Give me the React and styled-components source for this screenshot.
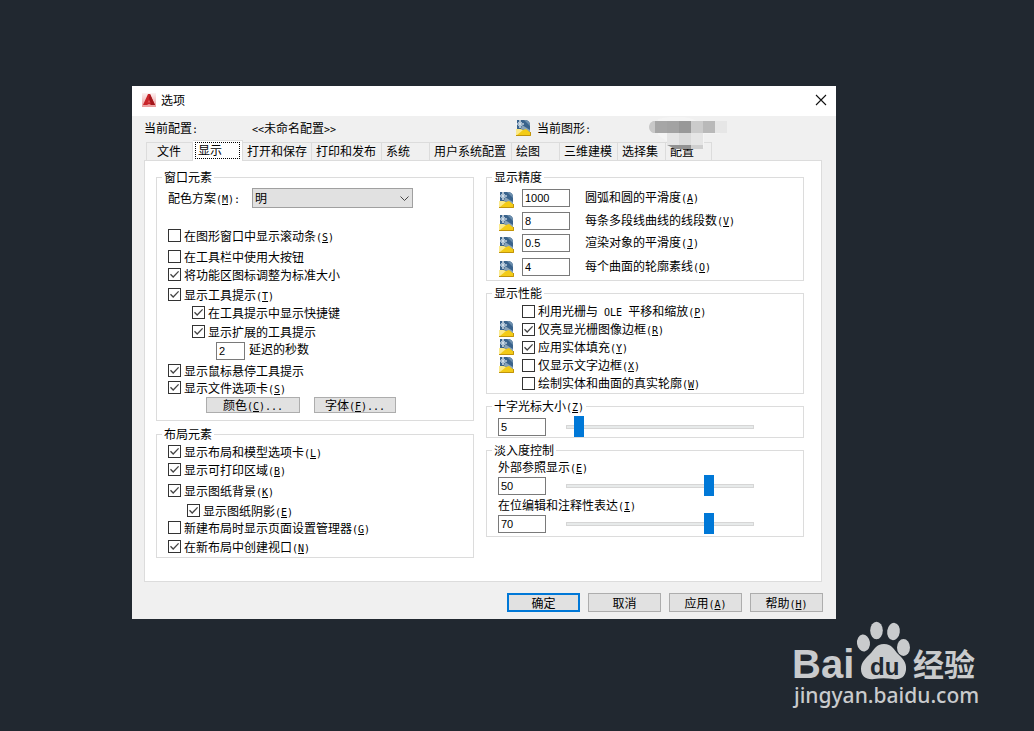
import { useState } from "react";
import styled, { createGlobalStyle } from "styled-components";

const GlobalStyle = createGlobalStyle`
   * {
      box-sizing: border-box;
   }

   body {
      margin: 0;
      background-color: #212830;
   }

   body, button, input, select {
      font-family: "Noto Sans CJK SC", sans-serif;
      font-size: 12px;
      color: #000;
   }
`

const Page = styled.main`
   display: flex;
   flex-direction: column;
   padding-top: 86px;
`

const Dialog = styled.section`
   margin: 0 198px 0 132px;
   min-width: 704px;
   background-color: #f0f0f0;
   line-height: 16px;
   white-space: nowrap;
`

const TitleBar = styled.header`
   display: flex;
   align-items: center;
   gap: 5px;
   height: 30px;
   padding: 0 9px 2px 10px;
   background-color: #fff;

   h1 {
      flex: 1;
      margin: 0;
      font-size: 12px;
      font-weight: 400;
   }

   button {
      display: flex;
      padding: 0;
      border: none;
      background: none;
   }
`

const ProfileBar = styled.div`
   display: grid;
   grid-template-columns: 108px 1fr 308px;
   align-items: center;
   height: 24px;
   padding: 0 12px;
`

const Drawing = styled.div`
   position: relative;
   display: flex;
   align-items: center;
   gap: 6px;
`

const Mosaic = styled.svg`
   position: absolute;
   left: 130px;
   top: -3px;
   z-index: 1;
`

const TabList = styled.div`
   display: flex;
   align-items: flex-end;
   height: 20px;
   padding-left: 14px;
`

const Tab = styled.button`
   width: ${(props) => props.$width}px;
   height: ${(props) => (props.$active ? 21 : 18)}px;
   margin-bottom: ${(props) => (props.$active ? -1 : 0)}px;
   padding: ${(props) => (props.$active ? "1px 2px 2px 2px" : "0 0 2px 4px")};
   border: 1px solid #dcdcdc;
   border-width: 1px 1px 0 0;
   background-color: ${(props) => (props.$active ? "#fff" : "#f0f0f0")};
   text-align: left;
   line-height: 15px;

   &:first-child {
      border-left-width: 1px;
      padding-left: 10px;
   }

   span {
      display: block;
      height: 17px;
      padding-left: 2px;
      border: 1px dotted #000;
      line-height: 14px;
   }
`

const Panel = styled.div`
   display: grid;
   grid-template-columns: 1fr 1fr;
   align-items: start;
   gap: 12px;
   margin: 0 14px 0 12px;
   padding: 8px 17px 23px 11px;
   border: 1px solid #dcdcdc;
   background-color: #fff;
`

const Column = styled.div`
   display: flex;
   flex-direction: column;
   gap: ${(props) => props.$gap}px;
`

const Group = styled.fieldset`
   min-width: 0;
   margin: 0;
   padding: 0 11px ${(props) => props.$bottom}px;
   border: 1px solid #dcdcdc;

   legend {
      height: 16px;
      margin-left: -6px;
      padding: 0 2px;
   }
`

const Row = styled.div`
   display: flex;
   align-items: ${(props) => props.$align || "center"};
   height: ${(props) => props.$height || 17}px;
   margin-top: ${(props) => props.$top || 0}px;
   padding-left: ${(props) => props.$indent || 0}px;
`

const CheckLabel = styled.label`
   display: flex;
   align-items: center;
   gap: 3px;

   input {
      appearance: none;
      width: 13px;
      height: 13px;
      margin: 0;
      border: 1px solid #333;
      background-color: #fff;
   }

   input:checked {
      background-image: url("data:image/svg+xml,%3Csvg xmlns='http://www.w3.org/2000/svg' viewBox='0 0 11 11'%3E%3Cpath d='M1.5 5.2 4.2 8 9.6 2.4' fill='none' stroke='%23444' stroke-width='1.3'/%3E%3C/svg%3E");
   }
`

const Mono = styled.span`
   font-family: "DejaVu Sans Mono", monospace;
   font-size: 10px;
   line-height: 12px;
   white-space: pre;
`

const TextBox = styled.input`
   width: ${(props) => props.$width || 48}px;
   height: 18px;
   padding: 0 2px;
   border: 1px solid #7a7a7a;
   background-color: #fff;
   font-family: "Liberation Sans", sans-serif;
   font-size: 11px;
`

const SchemeLabel = styled.label`
   width: 84px;
`

const SelectWrap = styled.div`
   position: relative;

   select {
      appearance: none;
      display: block;
      width: 161px;
      height: 20px;
      padding: 0 2px 2px;
      border: 1px solid #a0a0a0;
      border-radius: 0;
      background-color: #e1e1e1;
   }

   svg {
      position: absolute;
      right: 4px;
      top: 8px;
      pointer-events: none;
   }
`

const DelayLabel = styled.label`
   margin-left: 4px;
   line-height: 14px;
`

const Button = styled.button`
   width: ${(props) => props.$width || 73}px;
   height: ${(props) => (props.$small ? 16 : 19)}px;
   padding: 0;
   border: ${(props) => (props.$primary ? "2px solid #0078d7" : "1px solid #adadad")};
   background-color: #e1e1e1;
   line-height: ${(props) => (props.$small ? 14 : 15)}px;
`

const SmallButtons = styled(Row)`
   gap: 14px;
`

const IconSlot = styled.span`
   display: flex;
   align-self: ${(props) => props.$align || "center"};
   flex: none;
   width: 24px;
   padding-left: 1px;
`

const PrecisionLabel = styled.label`
   margin-left: 15px;
`

const Slider = styled.input`
   appearance: none;
   width: 188px;
   height: 21px;
   margin: 0 0 0 20px;
   background: none;

   &::-webkit-slider-runnable-track {
      height: 4px;
      border: 1px solid #d6d6d6;
      background-color: #e7eaea;
   }

   &::-webkit-slider-thumb {
      appearance: none;
      width: 10px;
      height: 21px;
      margin-top: -10px;
      background-color: #0078d7;
   }
`

const Footer = styled.footer`
   display: flex;
   justify-content: flex-end;
   gap: 8px;
   padding: 11px 13px 7px;
`

const Watermark = styled.svg`
   align-self: flex-end;
   margin-right: 54px;
`

const tabs = [
   { name: "文件", width: 47 },
   { name: "显示", width: 50 },
   { name: "打开和保存", width: 69 },
   { name: "打印和发布", width: 70 },
   { name: "系统", width: 48 },
   { name: "用户系统配置", width: 82 },
   { name: "绘图", width: 48 },
   { name: "三维建模", width: 58 },
   { name: "选择集", width: 48 },
   { name: "配置", width: 46 },
]

const windowChecks = [
   { text: "在图形窗口中显示滚动条", hotkey: "S", top: 19 },
   { text: "在工具栏中使用大按钮", top: 4 },
   { text: "将功能区图标调整为标准大小", checked: true, top: 1 },
   { text: "显示工具提示", hotkey: "T", checked: true, top: 3 },
   { text: "在工具提示中显示快捷键", checked: true, top: 1, indent: 24 },
   { text: "显示扩展的工具提示", checked: true, top: 2, indent: 24 },
]

const layoutChecks = [
   { text: "显示布局和模型选项卡", hotkey: "L", checked: true, top: 1 },
   { text: "显示可打印区域", hotkey: "B", checked: true, top: 1 },
   { text: "显示图纸背景", hotkey: "K", checked: true, top: 4 },
   { text: "显示图纸阴影", hotkey: "E", checked: true, top: 3, indent: 19 },
   { text: "新建布局时显示页面设置管理器", hotkey: "G" },
   { text: "在新布局中创建视口", hotkey: "N", checked: true, top: 2 },
]

const precision = [
   { id: "arc", text: "圆弧和圆的平滑度", hotkey: "A", value: "1000", top: 4 },
   { id: "polyline", text: "每条多段线曲线的线段数", hotkey: "V", value: "8", top: 4 },
   { id: "render", text: "渲染对象的平滑度", hotkey: "J", value: "0.5", top: 3 },
   { id: "contour", text: "每个曲面的轮廓素线", hotkey: "O", value: "4", top: 5 },
]

const performance = [
   { text: <>利用光栅与<Mono> OLE </Mono>平移和缩放</>, hotkey: "P", top: 1 },
   { text: "仅亮显光栅图像边框", hotkey: "R", checked: true, icon: true },
   { text: "应用实体填充", hotkey: "Y", checked: true, icon: true },
   { text: "仅显示文字边框", hotkey: "X", icon: true },
   { text: "绘制实体和曲面的真实轮廓", hotkey: "W" },
]

const Hotkey = ({ letter, after }) => (
   <Mono>(<u>{letter}</u>){after}</Mono>
)

const Check = ({ text, hotkey, checked }) => (
   <CheckLabel>
      <input type="checkbox" defaultChecked={checked} />
      <span>{text}{hotkey && <Hotkey letter={hotkey} />}</span>
   </CheckLabel>
)

const DrawingIcon = () => (
   <svg width="15" height="16" viewBox="0 0 15 16" aria-hidden="true">
      <path d="M1 0h9q4 1 4 5v8H1z" fill="#3a638c" />
      <path d="M8 0h2q4 1 4 5v1z" fill="#6d8fae" />
      <path d="M6 5l8 5v2L5 9z" fill="#8aa3b8" />
      <path d="M0 9h4l3 1 3-1 5 4v3H0z" fill="#f3cb17" />
      <path d="M0 9h4l3 1-6 5H0z" fill="#fbe98a" />
      <path d="M0 15.5h14.5V12" stroke="#c0930c" fill="none" />
      <path d="M4 0v8M0 4h8" stroke="#fff" strokeWidth="1.2" />
      <path d="M2 2l4 4M6 2 2 6" stroke="#c9dcea" strokeWidth=".8" />
   </svg>
)

const AppIcon = () => (
   <svg width="14" height="14" viewBox="0 0 14 14" aria-hidden="true">
      <defs>
         <linearGradient id="appBg" x1="0" y1="0" x2="0" y2="1">
            <stop offset="0" stopColor="#fdf3f3" />
            <stop offset="1" stopColor="#ea9a9a" />
         </linearGradient>
      </defs>
      <rect width="14" height="14" fill="url(#appBg)" />
      <path d="M6 1h2l5 11H9l-2-1-2 1H1z" fill="#c9252a" />
      <path d="M8 1l5 11H9L7 5z" fill="#a3161b" />
      <path d="M5.500 9.500 7 7l1.500 2.500z" fill="#d9565a" />
   </svg>
)

const HiddenName = () => (
   <Mosaic width="81" height="34" viewBox="0 0 81 34" aria-hidden="true">
      <path d="M12 2Q40-4 52 5h22v12H58v14H30L12 18z" fill="#f4f4f4" />
      <path d="M9 4H7Q3 6 3 10t4 6h2z" fill="#c8c8c8" />
      <rect x="9" y="4" width="12" height="12" fill="#a6a6a6" />
      <rect x="21" y="4" width="12" height="12" fill="#a3a3a3" />
      <rect x="33" y="4" width="12" height="12" fill="#989898" />
      <rect x="45" y="4" width="12" height="12" fill="#cbcbcb" />
      <rect x="57" y="4" width="12" height="12" fill="#b9b9b9" />
      <rect x="69" y="4" width="12" height="12" fill="#e6e6e6" />
      <rect x="21" y="16" width="36" height="12" fill="#e5e5e5" />
      <rect x="33" y="16" width="12" height="12" fill="#dadada" />
      <path d="M21 28h24v4H29z" fill="#929292" />
      <rect x="45" y="28" width="12" height="4" fill="#cfcfcf" />
   </Mosaic>
)

const SliderRow = ({ id, name, value, position, min, max, top }) => (
   <Row $height={21} $top={top}>
      <TextBox id={id} aria-label={name} defaultValue={value} />
      <Slider type="range" aria-label={name} min={min} max={max} defaultValue={position} />
   </Row>
)

const WindowGroup = () => (
   <Group $bottom={7}>
      <legend>窗口元素</legend>
      <Row $height={20} $top={3}>
         <SchemeLabel htmlFor="scheme">配色方案<Hotkey letter="M" after=":" /></SchemeLabel>
         <SelectWrap>
            <select id="scheme" defaultValue="明">
               <option>明</option>
               <option>暗</option>
            </select>
            <svg width="9" height="6" viewBox="0 0 9 6"><path d="M.5.500 4.500 4.500 8.500.500" fill="none" stroke="#444" /></svg>
         </SelectWrap>
      </Row>
      {windowChecks.map((item) => (
         <Row key={item.text} $top={item.top} $indent={item.indent}>
            <Check {...item} />
         </Row>
      ))}
      <Row $align="flex-start" $height={18} $top={2} $indent={48}>
         <TextBox id="delay" $width={29} defaultValue="2" />
         <DelayLabel htmlFor="delay">延迟的秒数</DelayLabel>
      </Row>
      <Row $top={2}><Check text="显示鼠标悬停工具提示" checked /></Row>
      <Row><Check text="显示文件选项卡" hotkey="S" checked /></Row>
      <SmallButtons $height={16} $top={1} $indent={38}>
         <Button type="button" $small $width={94}>颜色<Hotkey letter="C" after="..." /></Button>
         <Button type="button" $small $width={82}>字体<Hotkey letter="F" after="..." /></Button>
      </SmallButtons>
   </Group>
)

export default function App() {
   const [active, setActive] = useState("显示")

   return (
      <Page>
         <GlobalStyle />
         <Dialog>
            <TitleBar>
               <AppIcon />
               <h1>选项</h1>
               <button type="button" aria-label="关闭">
                  <svg width="12" height="12" viewBox="0 0 12 12">
                     <path d="M1 1l10 10M11 1 1 11" stroke="#111" strokeWidth="1.1" />
                  </svg>
               </button>
            </TitleBar>
            <ProfileBar>
               <span>当前配置<Mono>:</Mono></span>
               <span><Mono>&lt;&lt;</Mono>未命名配置<Mono>&gt;&gt;</Mono></span>
               <Drawing>
                  <DrawingIcon />
                  <span>当前图形<Mono>:</Mono></span>
                  <HiddenName />
               </Drawing>
            </ProfileBar>
            <TabList role="tablist">
               {tabs.map((tab) => (
                  <Tab
                     key={tab.name}
                     type="button"
                     role="tab"
                     aria-selected={tab.name === active}
                     $active={tab.name === active}
                     $width={tab.width}
                     onClick={() => setActive(tab.name)}
                  >
                     {tab.name === active ? <span>{tab.name}</span> : tab.name}
                  </Tab>
               ))}
            </TabList>
            <Panel>
               <Column $gap={5}>
                  <WindowGroup />
                  <Group $bottom={2}>
                     <legend>布局元素</legend>
                     {layoutChecks.map((item) => (
                        <Row key={item.text} $top={item.top} $indent={item.indent}>
                           <Check {...item} />
                        </Row>
                     ))}
                  </Group>
               </Column>
               <Column $gap={4}>
                  <Group $bottom={3}>
                     <legend>显示精度</legend>
                     {precision.map((item) => (
                        <Row key={item.id} $align="flex-start" $height={19} $top={item.top}>
                           <IconSlot $align="flex-end"><DrawingIcon /></IconSlot>
                           <TextBox id={item.id} defaultValue={item.value} />
                           <PrecisionLabel htmlFor={item.id}>{item.text}<Hotkey letter={item.hotkey} /></PrecisionLabel>
                        </Row>
                     ))}
                  </Group>
                  <Group $bottom={1}>
                     <legend>显示性能</legend>
                     {performance.map((item) => (
                        <Row key={item.hotkey} $height={18} $top={item.top}>
                           <IconSlot>{item.icon && <DrawingIcon />}</IconSlot>
                           <Check {...item} />
                        </Row>
                     ))}
                  </Group>
                  <Group $bottom={0}>
                     <legend>十字光标大小<Hotkey letter="Z" /></legend>
                     <SliderRow id="crosshair" name="十字光标大小" value="5" position={5} min={1} max={100} top={2} />
                  </Group>
                  <Group $bottom={2}>
                     <legend>淡入度控制</legend>
                     <Row $height={16} $top={1}>
                        <label htmlFor="xref">外部参照显示<Hotkey letter="E" /></label>
                     </Row>
                     <SliderRow id="xref" name="外部参照显示" value="50" position={70} min={0} max={90} />
                     <Row $height={16} $top={1}>
                        <label htmlFor="inplace">在位编辑和注释性表达<Hotkey letter="I" /></label>
                     </Row>
                     <SliderRow id="inplace" name="在位编辑和注释性表达" value="70" position={70} min={0} max={90} />
                  </Group>
               </Column>
            </Panel>
            <Footer>
               <Button type="button" $primary>确定</Button>
               <Button type="button">取消</Button>
               <Button type="button">应用<Hotkey letter="A" /></Button>
               <Button type="button">帮助<Hotkey letter="H" /></Button>
            </Footer>
         </Dialog>
         <Watermark width="190" height="96" viewBox="0 0 190 96" fill="#c9cbcd">
            <text x="2" y="59" fontFamily="Liberation Sans, sans-serif" fontSize="40" fontWeight="700">Bai</text>
            <ellipse cx="73.500" cy="24" rx="6.500" ry="8.500" transform="rotate(-8 73.500 24)" />
            <ellipse cx="86.500" cy="11.500" rx="6.300" ry="8.700" />
            <ellipse cx="103.500" cy="12.500" rx="6.300" ry="8.700" transform="rotate(8 103.500 12.500)" />
            <ellipse cx="113.500" cy="28.500" rx="6.500" ry="8.500" />
            <path d="M94 25c8 0 10 6 14 10 4 4 9 8 8 16-1 8-7 10-13 9-6-1-13-1-19 0-7 1-13-2-13-10 0-7 5-11 9-15 4-4 6-10 14-10z" />
            <text x="80" y="56" fill="#212830" fontFamily="Liberation Sans, sans-serif" fontSize="24" fontWeight="700">du</text>
            <text x="123" y="57" fontFamily="Noto Sans CJK SC, sans-serif" fontSize="31" fontWeight="700">经验</text>
            <text x="4" y="84" fontFamily="Noto Sans, sans-serif" fontSize="21" fontWeight="500">jingyan.baidu.com</text>
         </Watermark>
      </Page>
   )
}
